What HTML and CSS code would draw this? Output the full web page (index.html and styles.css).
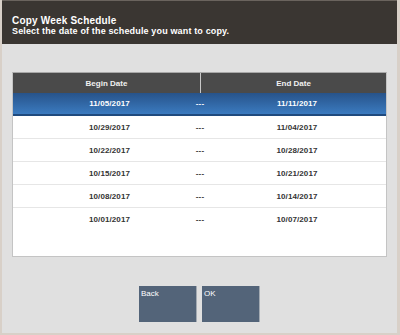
FILE: index.html
```html
<!DOCTYPE html>
<html>
<head>
<meta charset="utf-8">
<link rel="stylesheet" href="styles.css">
</head>
<body>
<div class="frame">
  <header class="top">
    <div class="title">Copy Week Schedule</div>
    <div class="subtitle">Select the date of the schedule you want to copy.</div>
  </header>
  <main class="content">
    <section class="panel">
      <div class="thead">
        <div class="th">Begin Date</div>
        <div class="th">End Date</div>
      </div>
      <div class="row selected"><span class="b">11/05/2017</span><span class="dash">---</span><span class="e">11/11/2017</span></div>
      <div class="row"><span class="b">10/29/2017</span><span class="dash">---</span><span class="e">11/04/2017</span></div>
      <div class="row"><span class="b">10/22/2017</span><span class="dash">---</span><span class="e">10/28/2017</span></div>
      <div class="row"><span class="b">10/15/2017</span><span class="dash">---</span><span class="e">10/21/2017</span></div>
      <div class="row"><span class="b">10/08/2017</span><span class="dash">---</span><span class="e">10/14/2017</span></div>
      <div class="row last"><span class="b">10/01/2017</span><span class="dash">---</span><span class="e">10/07/2017</span></div>
    </section>
    <div class="actions">
      <button class="btn">Back</button>
      <button class="btn">OK</button>
    </div>
  </main>
</div>
</body>
</html>
```
FILE: styles.css
```css
html, body {
  margin: 0;
  padding: 0;
  background: #ffffff;
}
body {
  font-family: "Liberation Sans", Arial, sans-serif;
}
.frame {
  width: 395px;
  height: 333px;
  border-left: 2px solid #d8d0c8;
  border-right: 3px solid #d8d0c8;
  border-bottom: 2px solid #d8d0c8;
  background: #e0e0e0;
  display: flex;
  flex-direction: column;
}
.top {
  height: 44px;
  border-top: 1px solid #6a645e;
  background: #3a3632;
  color: #ffffff;
  font-weight: bold;
  padding-left: 10px;
  box-sizing: border-box;
  padding-top: 14px;
}
.title {
  font-size: 10px;
  letter-spacing: 0.2px;
  line-height: 11px;
}
.subtitle {
  font-size: 9px;
  letter-spacing: 0.15px;
  line-height: 11px;
}
.content {
  flex: 1;
  display: flex;
  flex-direction: column;
  padding: 28px 10px 0 10px;
}
.panel {
  height: 185px;
  box-sizing: border-box;
  background: #ffffff;
  border: 1px solid #c4c4c4;
  border-top: 1px solid #a8a8a8;
}
.thead {
  display: grid;
  grid-template-columns: 187px 1fr;
  height: 20px;
  background: #4a4a4a;
  color: #f0f0f0;
  font-size: 8px;
  font-weight: bold;
}
.th {
  display: flex;
  align-items: center;
  justify-content: center;
}
.th + .th {
  border-left: 1px solid #c8c8c8;
}
.row {
  display: grid;
  grid-template-columns: 187px 0 1fr;
  height: 23px;
  box-sizing: border-box;
  border-bottom: 1px solid #e6e6e6;
  align-items: center;
  font-size: 8px;
  font-weight: bold;
  color: #333333;
  letter-spacing: 0.1px;
}
.row.last {
  border-bottom: none;
}
.row .b {
  text-align: center;
  padding-left: 6px;
}
.row .dash {
  display: flex;
  justify-content: center;
  overflow: visible;
  white-space: nowrap;
}
.row .e {
  text-align: center;
  padding-left: 8px;
}
.row.selected {
  background: linear-gradient(#27538a, #3b7bc0);
  border-bottom: 2px solid #1f4a7e;
  color: #ffffff;
}
.actions {
  display: flex;
  justify-content: center;
  gap: 5px;
  margin-top: 29px;
}
.btn {
  width: 58px;
  height: 36px;
  background: #536479;
  border: none;
  border-right: 1px solid #a4abb3;
  color: #ffffff;
  font-family: "Liberation Sans", Arial, sans-serif;
  font-size: 8px;
  text-align: left;
  padding: 3px 2px;
  display: flex;
  align-items: flex-start;
}
```
